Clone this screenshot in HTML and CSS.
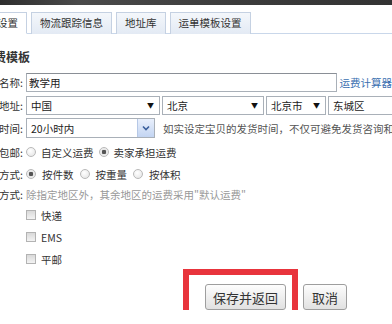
FILE: index.html
```html
<!DOCTYPE html>
<html lang="zh-CN">
<head>
    <meta charset="UTF-8">
    <meta name="viewport" content="width=device-width, initial-scale=1.0">
    <title>运费模板设置</title>
    <link rel="stylesheet" href="styles.css">
</head>
<body>
    <div class="topbar"></div>
    <div class="page">
        <ul class="tabs">
            <li class="tab active">运费模板设置</li>
            <li class="tab">物流跟踪信息</li>
            <li class="tab">地址库</li>
            <li class="tab">运单模板设置</li>
        </ul>

        <h2 class="title">新增运费模板</h2>

        <form class="form" onsubmit="return false">
            <div class="row">
                <label class="label" for="name">模板名称:</label>
                <input class="text" type="text" id="name" value="教学用">
                <a class="calc" href="#">运费计算器</a>
            </div>

            <div class="row">
                <label class="label">宝贝地址:</label>
                <span class="select w-country">中国</span>
                <span class="select w-province">北京</span>
                <span class="select w-city">北京市</span>
                <span class="select w-area">东城区</span>
            </div>

            <div class="row">
                <label class="label">发货时间:</label>
                <span class="combo">
                    20小时内
                    <span class="combo-btn">
                        <svg width="8" height="6" viewBox="0 0 8 6"><path d="M1 1.5 L4 4.5 L7 1.5" fill="none" stroke="#3a5f9c" stroke-width="1.6"/></svg>
                    </span>
                </span>
                <span class="hint">如实设定宝贝的发货时间，不仅可避免发货咨询和纠纷，还能促进成交</span>
            </div>

            <div class="row tall">
                <label class="label">是否包邮:</label>
                <input class="radio" type="radio" name="free"><span class="opt">自定义运费</span>
                <input class="radio" type="radio" name="free" checked><span class="opt">卖家承担运费</span>
            </div>

            <div class="row tall wide">
                <label class="label">计价方式:</label>
                <input class="radio" type="radio" name="calc" checked><span class="opt">按件数</span>
                <input class="radio" type="radio" name="calc"><span class="opt">按重量</span>
                <input class="radio" type="radio" name="calc"><span class="opt">按体积</span>
            </div>

            <div class="row block">
                <label class="label">运送方式:</label>
                <div class="ways">
                    <p class="note">除指定地区外，其余地区的运费采用"默认运费"</p>
                    <div class="way"><input class="check" type="checkbox"><span>快递</span></div>
                    <div class="way"><input class="check" type="checkbox"><span>EMS</span></div>
                    <div class="way"><input class="check" type="checkbox"><span>平邮</span></div>
                </div>
            </div>

            <div class="actions">
                <span class="save-wrap"><button class="btn save" type="submit">保存并返回</button></span>
                <button class="btn cancel" type="button">取消</button>
            </div>
        </form>
    </div>
</body>
</html>
```

FILE: styles.css
```css
body {
    margin: 0;
    overflow: hidden;
    background: #fff;
    color: #333;
    font-family: "Noto Sans CJK SC", sans-serif;
    font-size: 10.5px;
}

.topbar {
    height: 5px;
    background: linear-gradient(90deg, #2e2e2e 0%, #4a4a4a 20%, #3c3c3c 60%, #333 100%);
}

.page {
    margin-left: -57px;
}

/* tabs */
.tabs {
    display: flex;
    gap: 4px;
    list-style: none;
    margin: 7px 0 0;
    padding: 0 0 0 3px;
    border-bottom: 1px solid #c9d7ea;
}

.tab {
    padding: 0 8px;
    line-height: 20px;
    border: 1px solid #c5d1e2;
    border-bottom: none;
    margin-bottom: -1px;
    background: linear-gradient(#f4f7fb, #e3eaf4);
    color: #333;
    white-space: nowrap;
}

.tab.active {
    background: #fff;
    border-bottom: 1px solid #fff;
}

.title {
    margin: 15px 0 0 15px;
    font-size: 12px;
    line-height: 16px;
    font-weight: bold;
    color: #333;
}

/* form rows */
.form {
    margin-top: 7px;
}

.row {
    display: flex;
    align-items: center;
    height: 20px;
    margin-bottom: 3px;
    white-space: nowrap;
}

.row.tall {
    height: 22px;
    margin-bottom: 0;
}

.row.block {
    align-items: flex-start;
    height: auto;
    margin-top: 1px;
}

.label {
    width: 80px;
    margin-right: 3px;
    text-align: right;
    flex-shrink: 0;
}

.row.block .label {
    line-height: 18px;
}

.text {
    box-sizing: border-box;
    width: 314px;
    height: 19px;
    padding: 0 2px;
    border: 1px solid #a9b0b8;
    border-top-color: #8a8f96;
    font: inherit;
    color: #222;
}

.calc {
    margin-left: 3px;
    color: #3a6fb0;
    text-decoration: none;
}

.select {
    position: relative;
    box-sizing: border-box;
    height: 19px;
    line-height: 17px;
    margin-right: 2px;
    padding-left: 4px;
    border: 1px solid #a9b0b8;
    color: #222;
    flex-shrink: 0;
}

.select::after {
    content: "▼";
    position: absolute;
    right: 5px;
    top: 0;
    font-size: 7px;
    color: #111;
}

.w-country { width: 134px; }
.w-province { width: 102px; }
.w-city { width: 60px; }
.w-area { width: 80px; }
.w-area::after { display: none; }

.combo {
    display: flex;
    align-items: center;
    justify-content: space-between;
    box-sizing: border-box;
    width: 129px;
    height: 20px;
    padding-left: 4px;
    border: 1px solid #a9b0b8;
    color: #222;
    flex-shrink: 0;
}

.combo-btn {
    display: flex;
    align-items: center;
    justify-content: center;
    width: 16px;
    height: 18px;
    background: linear-gradient(#e9f0fc, #c3d5f2);
    border-left: 1px solid #b6c8e6;
}

.hint {
    margin-left: 8px;
    color: #555;
}

/* radios & checkboxes */
.radio {
    appearance: none;
    box-sizing: border-box;
    width: 10px;
    height: 10px;
    margin: 0 5px 0 0;
    border: 1px solid #b9b9b9;
    border-radius: 50%;
    background: radial-gradient(circle at 40% 35%, #fff, #e2e2e2);
    flex-shrink: 0;
}

.radio:checked {
    background: radial-gradient(circle, #555 0 2px, #e6e6e6 2.5px, #f8f8f8);
}

.opt {
    margin-right: 5px;
}

.row.wide .radio {
    margin-right: 6px;
}

.row.wide .opt {
    margin-right: 6px;
}

.note {
    margin: 0;
    line-height: 18px;
    color: #999;
}

.way {
    display: flex;
    align-items: center;
    height: 22px;
}

.check {
    appearance: none;
    box-sizing: border-box;
    width: 10px;
    height: 10px;
    margin: 0 5px 0 0;
    border: 1px solid #b3b3b3;
    background: linear-gradient(#d9d9d9, #f3f3f3);
}

/* buttons */
.actions {
    display: flex;
    gap: 17px;
    margin-top: 14px;
    padding-left: 262px;
}

.save-wrap {
    position: relative;
    display: inline-flex;
}

.save-wrap::before {
    content: "";
    position: absolute;
    top: -15px;
    left: -22px;
    right: -12px;
    bottom: -30px;
    border: 6px solid #e8343c;
}

.btn {
    box-sizing: border-box;
    height: 26px;
    padding: 0;
    border: 1px solid #9e9e9e;
    border-radius: 3px;
    background: linear-gradient(#fdfdfd, #e1e1e1);
    color: #333;
    font-family: "Noto Sans CJK SC", sans-serif;
    font-size: 13px;
    cursor: pointer;
}

.save {
    width: 81px;
}

.cancel {
    width: 44px;
}
```
